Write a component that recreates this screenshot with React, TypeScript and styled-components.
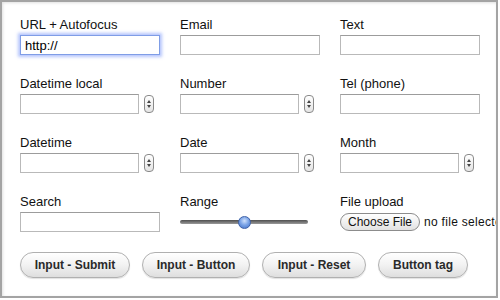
import React from "react";
import styled, { createGlobalStyle } from "styled-components";

const GlobalStyle = createGlobalStyle`
    html, body {
        margin: 0;
        padding: 0;
        background: #ffffff;
    }
    body {
        font-family: "Liberation Sans", Arial, Helvetica, sans-serif;
        color: #111;
    }
`;

const Frame = styled.div`
    box-sizing: border-box;
    width: 498px;
    height: 298px;
    border: 2px solid #a4a4a4;
    box-shadow: inset 1px 1px 3px rgba(0, 0, 0, 0.12);
    padding: 15px 0 0 18px;
    overflow: hidden;
    background: #fff;
`;

const FieldGrid = styled.div`
    display: grid;
    grid-template-columns: repeat(3, 160px);
    row-gap: 21px;
`;

const Field = styled.div`
    display: flex;
    flex-direction: column;
    gap: 2px;
    white-space: nowrap;
`;

const Label = styled.label`
    font-size: 13px;
    line-height: 16px;
    height: 16px;
    color: #111;
`;

const Control = styled.div`
    display: flex;
    align-items: center;
    height: 20px;
`;

const TextBox = styled.input<{ $width?: number; $focused?: boolean }>`
    box-sizing: border-box;
    width: ${(p) => p.$width || 140}px;
    height: 20px;
    margin: 0;
    padding: 1px 4px 0;
    font-family: "Liberation Sans", Arial, sans-serif;
    font-size: 13px;
    color: #000;
    background: #fff;
    border: 1px solid ${(p) => (p.$focused ? "#7f9de6" : "#b9b9b9")};
    border-top-color: ${(p) => (p.$focused ? "#7f9de6" : "#9c9c9c")};
    border-radius: 0;
    outline: none;
    box-shadow: ${(p) => (p.$focused ? "0 0 3px 2px rgba(120, 150, 250, 0.55)" : "none")};
`;

const Spinner = styled.div`
    position: relative;
    box-sizing: border-box;
    width: 10px;
    height: 18px;
    margin-left: 5px;
    border: 1px solid #8a8a8a;
    border-radius: 4px;
    background: linear-gradient(#ffffff, #e4e4e4);

    &::before,
    &::after {
        content: "";
        position: absolute;
        left: 2px;
        border-left: 2px solid transparent;
        border-right: 2px solid transparent;
    }
    &::before {
        top: 4px;
        border-bottom: 3px solid #444;
    }
    &::after {
        bottom: 4px;
        border-top: 3px solid #444;
    }
`;

const Range = styled.input`
    -webkit-appearance: none;
    appearance: none;
    width: 128px;
    height: 14px;
    margin: 0;
    padding: 0;
    background: transparent;

    &::-webkit-slider-runnable-track {
        height: 4px;
        border-radius: 2px;
        background: linear-gradient(#4e4e4e, #9a9a9a);
        box-shadow: 0 1px 0 rgba(255, 255, 255, 0.6);
    }
    &::-webkit-slider-thumb {
        -webkit-appearance: none;
        width: 13px;
        height: 13px;
        margin-top: -4.5px;
        border-radius: 50%;
        border: 1px solid #3f62a8;
        box-sizing: border-box;
        background: radial-gradient(circle at 50% 35%, #cfe0fb 0%, #7ea6e8 45%, #3e6fc8 100%);
    }
`;

const FileRow = styled.div`
    display: flex;
    align-items: center;
    gap: 4px;
    height: 20px;
    font-family: "Liberation Sans", Arial, sans-serif;
    font-size: 12px;
`;

const FileButton = styled.span`
    box-sizing: border-box;
    height: 18px;
    padding: 0 7px;
    display: inline-flex;
    align-items: center;
    border: 1px solid #8c8c8c;
    border-radius: 9px;
    background: linear-gradient(#ffffff, #e2e2e2);
    color: #111;
    font-size: 12px;
`;

const FileName = styled.span`
    color: #111;
    letter-spacing: 0.3px;
`;

const ButtonRow = styled.div`
    display: flex;
    gap: 12px;
    margin-top: 20px;
`;

const PillButton = styled.button<{ $width: number }>`
    box-sizing: border-box;
    width: ${(p) => p.$width}px;
    height: 26px;
    padding: 0;
    border: 1px solid #b0b0b0;
    border-radius: 13px;
    background: linear-gradient(#ffffff 0%, #f2f2f2 50%, #dedede 100%);
    box-shadow: 0 1px 1px rgba(0, 0, 0, 0.12);
    font-family: "Liberation Sans", Arial, sans-serif;
    font-size: 12px;
    font-weight: bold;
    color: #2a2a2a;
`;

const DateField = ({ label }: { label: string }) => (
    <Field>
        <Label>{label}</Label>
        <Control>
            <TextBox $width={119} />
            <Spinner />
        </Control>
    </Field>
);

const TextField = ({ label, value, focused }: { label: string; value?: string; focused?: boolean }) => (
    <Field>
        <Label>{label}</Label>
        <Control>
            <TextBox defaultValue={value} $focused={focused} />
        </Control>
    </Field>
);

const App = () => {
    return (
        <>
            <GlobalStyle />
            <Frame>
                <FieldGrid>
                    <TextField label="URL + Autofocus" value="http://" focused />
                    <TextField label="Email" />
                    <TextField label="Text" />

                    <DateField label="Datetime local" />
                    <DateField label="Number" />
                    <TextField label="Tel (phone)" />

                    <DateField label="Datetime" />
                    <DateField label="Date" />
                    <DateField label="Month" />

                    <TextField label="Search" />
                    <Field>
                        <Label>Range</Label>
                        <Control>
                            <Range type="range" defaultValue={50} />
                        </Control>
                    </Field>
                    <Field>
                        <Label>File upload</Label>
                        <FileRow>
                            <FileButton>Choose File</FileButton>
                            <FileName>no file selected</FileName>
                        </FileRow>
                    </Field>
                </FieldGrid>

                <ButtonRow>
                    <PillButton $width={110}>Input - Submit</PillButton>
                    <PillButton $width={108}>Input - Button</PillButton>
                    <PillButton $width={104}>Input - Reset</PillButton>
                    <PillButton $width={90}>Button tag</PillButton>
                </ButtonRow>
            </Frame>
        </>
    );
};

export default App;
